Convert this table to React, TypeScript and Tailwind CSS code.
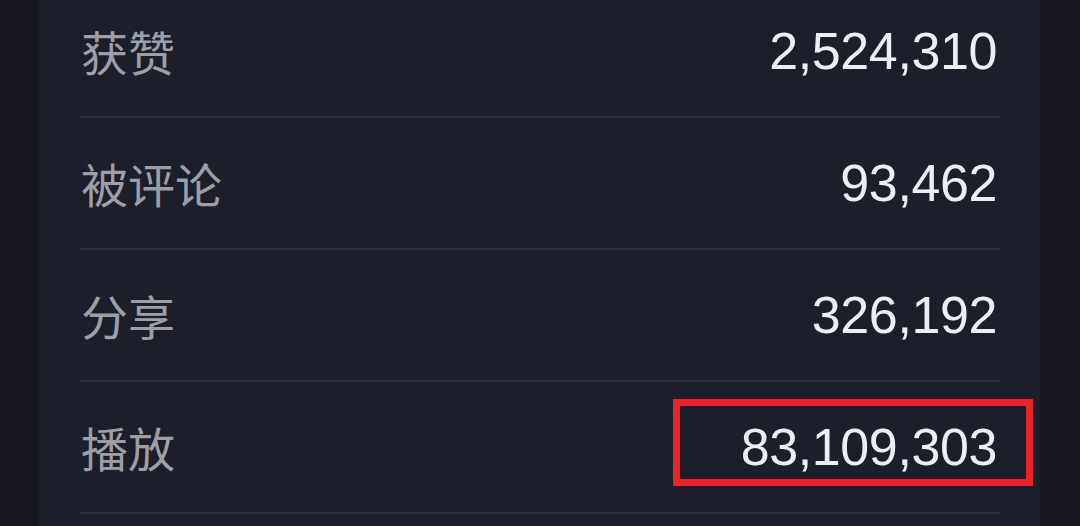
import React from "react";

const rows = [
  { label: "获赞", value: "2,524,310" },
  { label: "被评论", value: "93,462" },
  { label: "分享", value: "326,192" },
  { label: "播放", value: "83,109,303", highlight: true },
];

export default function App() {
  return (
    <div className="w-[1080px] h-[526px] overflow-hidden bg-[#161720] flex">
      <div className="ml-[39px] w-[1001px] h-full bg-[#1c1e29] pl-[41px] pr-[40px]">
        <div className="mt-[-14px] flex flex-col">
          {rows.map((r) => (
            <div
              key={r.label}
              className="relative h-[132px] border-b-2 border-[#2c2e38] flex items-center justify-between"
            >
              <span
                className="pl-[1px] pb-[2px] text-[47px] leading-none text-[#9d9ea6]"
                style={{ fontFamily: '"Noto Sans CJK SC", "Noto Sans", sans-serif' }}
              >
                {r.label}
              </span>
              <span
                className="pr-[3px] text-[52px] leading-none text-[#eceef2] tracking-[-0.4px]"
                style={{ fontFamily: '"Liberation Sans", Arial, sans-serif' }}
              >
                {r.value}
              </span>
              {r.highlight && (
                <div className="absolute left-[593px] top-[17px] w-[360px] h-[87px] border-[7px] border-[#e8232a]" />
              )}
            </div>
          ))}
        </div>
      </div>
    </div>
  );
}
